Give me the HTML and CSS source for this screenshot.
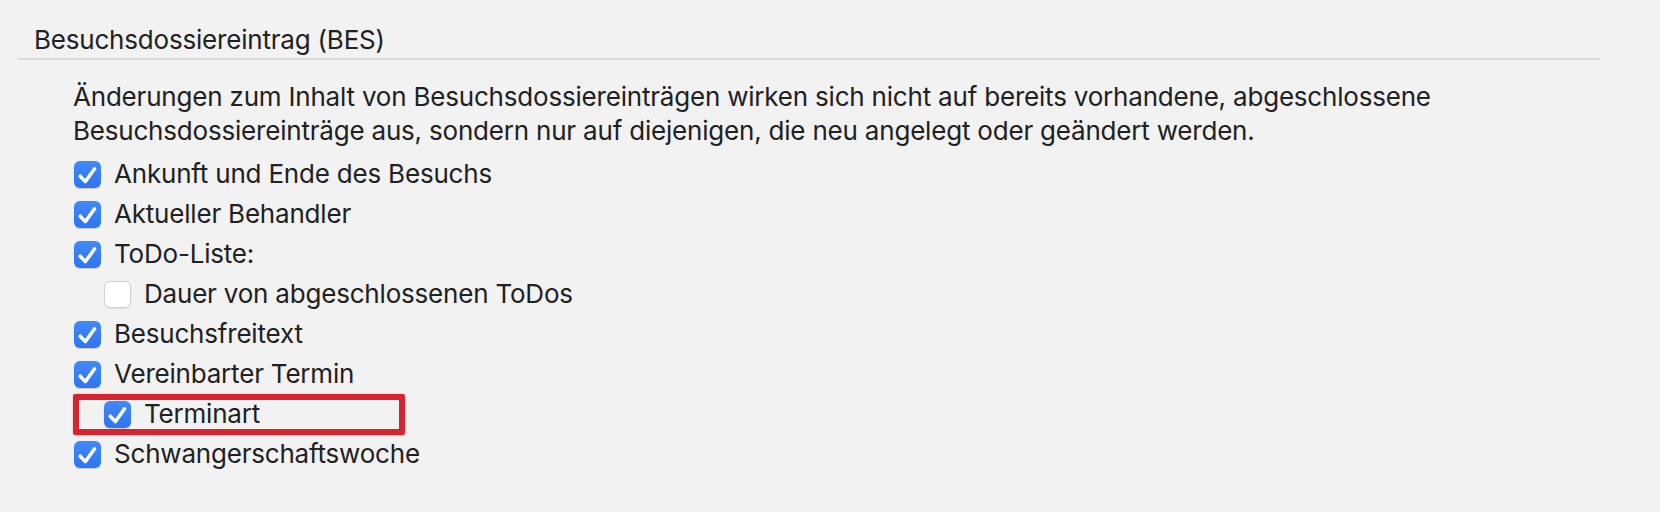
FILE: index.html
```html
<!DOCTYPE html>
<html lang="de">
<head>
<meta charset="utf-8">
<title>Besuchsdossiereintrag</title>
<link rel="stylesheet" href="styles.css">
</head>
<body>
<div class="panel">
  <div class="section-head">
    <h2 class="section-title">Besuchsdossiereintrag (BES)</h2>
  </div>
  <div class="section-body">
    <p class="note">Änderungen zum Inhalt von Besuchsdossiereinträgen wirken sich nicht auf bereits vorhandene, abgeschlossene<br>Besuchsdossiereinträge aus, sondern nur auf diejenigen, die neu angelegt oder geändert werden.</p>
    <ul class="options">
      <li class="opt"><span class="cb on"><svg viewBox="0 0 27 27"><path d="M6.2 15.2 L11.4 20.6 L20.6 7.8"/></svg></span><span class="lbl">Ankunft und Ende des Besuchs</span></li>
      <li class="opt"><span class="cb on"><svg viewBox="0 0 27 27"><path d="M6.2 15.2 L11.4 20.6 L20.6 7.8"/></svg></span><span class="lbl">Aktueller Behandler</span></li>
      <li class="opt"><span class="cb on"><svg viewBox="0 0 27 27"><path d="M6.2 15.2 L11.4 20.6 L20.6 7.8"/></svg></span><span class="lbl">ToDo-Liste:</span></li>
      <li class="opt sub"><span class="cb off"></span><span class="lbl">Dauer von abgeschlossenen ToDos</span></li>
      <li class="opt"><span class="cb on"><svg viewBox="0 0 27 27"><path d="M6.2 15.2 L11.4 20.6 L20.6 7.8"/></svg></span><span class="lbl">Besuchsfreitext</span></li>
      <li class="opt"><span class="cb on"><svg viewBox="0 0 27 27"><path d="M6.2 15.2 L11.4 20.6 L20.6 7.8"/></svg></span><span class="lbl">Vereinbarter Termin</span></li>
      <li class="opt sub marked"><span class="cb on"><svg viewBox="0 0 27 27"><path d="M6.2 15.2 L11.4 20.6 L20.6 7.8"/></svg></span><span class="lbl">Terminart</span></li>
      <li class="opt"><span class="cb on"><svg viewBox="0 0 27 27"><path d="M6.2 15.2 L11.4 20.6 L20.6 7.8"/></svg></span><span class="lbl">Schwangerschaftswoche</span></li>
    </ul>
  </div>
</div>
</body>
</html>
```

FILE: styles.css
```css
html, body {
  margin: 0;
  padding: 0;
  background: #f2f2f2;
}
body {
  width: 1660px;
  height: 512px;
  overflow: hidden;
  font-family: Inter, "Noto Sans", "Liberation Sans", sans-serif;
  color: #212121;
}
.panel {
  padding: 0 60px 0 18px;
}
.section-head {
  border-bottom: 2px solid #dadada;
  padding: 23px 0 1px 16px;
}
.section-title {
  margin: 0;
  font-size: 26px;
  font-weight: 400;
  line-height: 34px;
  letter-spacing: -0.2px;
}
.section-body {
  padding: 20px 0 0 55px;
}
.note {
  margin: 0;
  font-size: 26px;
  line-height: 34px;
  letter-spacing: -0.2px;
}
.options {
  list-style: none;
  margin: 6px 0 0 0;
  padding: 0;
}
.opt {
  display: flex;
  align-items: center;
  gap: 13px;
  height: 40px;
  line-height: 40px;
  font-size: 26px;
  letter-spacing: -0.2px;
}
.opt.sub {
  padding-left: 30px;
}
.opt.marked {
  position: relative;
}
.opt.marked::before {
  content: "";
  position: absolute;
  left: 0;
  top: 0;
  width: 332px;
  height: 41px;
  box-sizing: border-box;
  border: 6px solid #d7232f;
  border-radius: 2px;
  box-shadow: 0 0 2px rgba(140, 20, 30, 0.35);
}
.cb {
  flex: 0 0 auto;
  width: 27px;
  height: 27px;
  margin-left: 1px;
  border-radius: 6px;
  box-sizing: border-box;
  display: flex;
  align-items: center;
  justify-content: center;
}
.cb.on {
  background: linear-gradient(#4389f8, #2d74ef);
  box-shadow: 0 0.5px 1px rgba(0, 0, 0, 0.15);
}
.cb.off {
  background: #ffffff;
  border: 1px solid #d0d0d0;
  box-shadow: 0 0.5px 1px rgba(0, 0, 0, 0.08);
}
.cb svg {
  width: 27px;
  height: 27px;
  display: block;
}
.cb svg path {
  fill: none;
  stroke: #ffffff;
  stroke-width: 3.5;
  stroke-linecap: round;
  stroke-linejoin: round;
}
```
